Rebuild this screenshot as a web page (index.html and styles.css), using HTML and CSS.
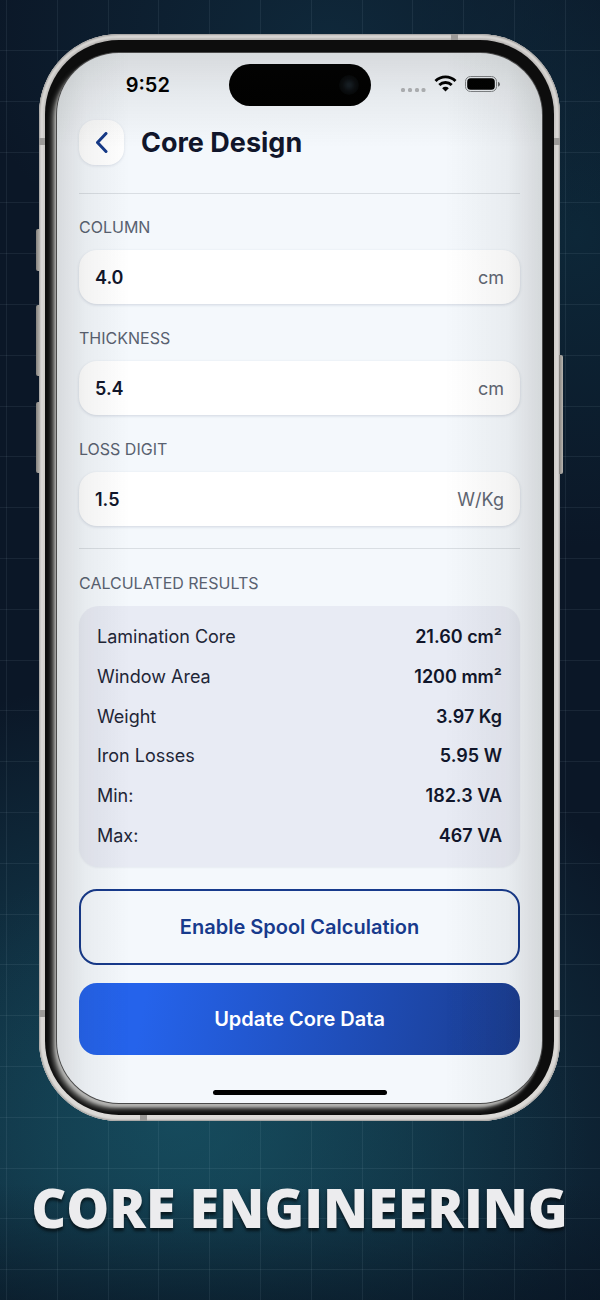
FILE: index.html
```
<!DOCTYPE html>
<html lang="en">
<head>
    <meta charset="UTF-8">
    <meta name="viewport" content="width=device-width, initial-scale=1.0">
    <title>Core Design</title>
    <link rel="stylesheet" href="styles.css">
</head>
<body>

<svg class="grid-lines" aria-hidden="true">
    <defs>
        <pattern id="grid" x="6" y="50" width="254" height="254" patternUnits="userSpaceOnUse">
            <path d="M0 0h1v254h-1zM51 0h1v254h-1zM102 0h1v254h-1zM152 0h1v254h-1zM203 0h1v254h-1z"/>
            <path d="M0 0v1h254v-1zM0 51v1h254v-1zM0 102v1h254v-1zM0 152v1h254v-1zM0 203v1h254v-1z"/>
        </pattern>
    </defs>
    <rect width="100%" height="100%" fill="url(#grid)"/>
</svg>

<main class="page">
    <div class="phone">
        <!-- Side keys -->
        <span class="key key-action"></span>
        <span class="key key-up"></span>
        <span class="key key-down"></span>
        <span class="key key-power"></span>
        <!-- Antenna bands -->
        <span class="band band-top"></span>
        <span class="band band-bottom"></span>
        <span class="band band-side band-left-high"></span>
        <span class="band band-side band-right-high"></span>
        <span class="band band-side band-left-low"></span>
        <span class="band band-side band-right-low"></span>

        <div class="bezel">
            <div class="screen">
                <div class="status-bar">
                    <span class="time">9:52</span>
                    <span class="island"><span class="camera"></span></span>
                    <svg class="status-icons" width="100" height="20" viewBox="0 0 100 20" aria-hidden="true">
                        <g fill="#b4b7ba">
                            <rect x="1" y="13" width="4" height="4" rx="1.5"/>
                            <rect x="8" y="13" width="4" height="4" rx="1.5"/>
                            <rect x="15" y="13" width="4" height="4" rx="1.5"/>
                            <rect x="21.5" y="13" width="4" height="4" rx="1.5"/>
                        </g>
                        <g fill="none" stroke="#000" stroke-width="2.9">
                            <path d="M35.5 6a14.2 14.2 0 0 1 20 0"/>
                            <path d="M39.3 10a9 9 0 0 1 12.4 0"/>
                        </g>
                        <path d="M42.2 13.2a4.6 4.6 0 0 1 6.6 0L45.5 16.6z"/>
                        <rect x="65.5" y="1.5" width="31" height="15" rx="5" fill="none" stroke="#85888b"/>
                        <rect x="67.2" y="3.2" width="27.6" height="11.6" rx="3.5"/>
                        <path d="M98 6.7q2 .6 2 2.5t-2 2.5z" fill="#6b6e70"/>
                    </svg>
                </div>

                <header class="header">
                    <button type="button" class="back" aria-label="Back">
                        <svg width="12" height="22" viewBox="0 0 12 22" fill="none" stroke="#153a8a" stroke-width="3" stroke-linecap="round" stroke-linejoin="round">
                            <path d="M10 1.5 1.5 10.5 10 19.5"/>
                        </svg>
                    </button>
                    <h1>Core Design</h1>
                </header>

                <form class="form">
                    <div class="field">
                        <label for="column">COLUMN</label>
                        <div class="input-box">
                            <input type="text" id="column" inputmode="decimal" value="4.0">
                            <span class="unit">cm</span>
                        </div>
                    </div>
                    <div class="field">
                        <label for="thickness">THICKNESS</label>
                        <div class="input-box">
                            <input type="text" id="thickness" inputmode="decimal" value="5.4">
                            <span class="unit">cm</span>
                        </div>
                    </div>
                    <div class="field">
                        <label for="loss">LOSS DIGIT</label>
                        <div class="input-box">
                            <input type="text" id="loss" inputmode="decimal" value="1.5">
                            <span class="unit">W/Kg</span>
                        </div>
                    </div>

                    <hr>

                    <section class="field">
                        <h2>CALCULATED RESULTS</h2>
                        <div class="results">
                            <table>
                                <tr><th scope="row">Lamination Core</th><td>21.60 cm²</td></tr>
                                <tr><th scope="row">Window Area</th><td>1200 mm²</td></tr>
                                <tr><th scope="row">Weight</th><td>3.97 Kg</td></tr>
                                <tr><th scope="row">Iron Losses</th><td>5.95 W</td></tr>
                                <tr><th scope="row">Min:</th><td>182.3 VA</td></tr>
                                <tr><th scope="row">Max:</th><td>467 VA</td></tr>
                            </table>
                        </div>
                    </section>

                    <div class="actions">
                        <button type="button" class="btn btn-outline">Enable Spool Calculation</button>
                        <button type="submit" class="btn btn-primary">Update Core Data</button>
                    </div>
                </form>

                <div class="home-bar"></div>
            </div>
        </div>
    </div>

    <p class="caption">CORE ENGINEERING</p>
</main>

</body>
</html>
```
FILE: styles.css
```
* {
    box-sizing: border-box;
}

body {
    margin: 0;
    min-height: 100vh;
    position: relative;
    overflow-x: hidden;
    font-family: Inter, "Liberation Sans", sans-serif;
    color: #11162b;
    background:
        linear-gradient(to bottom, transparent 91%, rgba(8, 20, 34, 0.6)),
        radial-gradient(ellipse 60% 24% at 38% 88%, #17506070, transparent),
        radial-gradient(ellipse 90% 34% at 30% 86%, #15475a, transparent),
        radial-gradient(ellipse 60% 20% at 55% 3%, #0f283a, transparent),
        radial-gradient(ellipse 40% 24% at 96% 18%, #0d2738, transparent),
        #0b1727;
}

.grid-lines {
    position: absolute;
    top: 0;
    left: 0;
    width: 100%;
    height: 100%;
    fill: rgba(190, 215, 230, 0.08);
}

.page {
    position: relative;
    padding: 34px 40px 0 39px;
}

/* Phone body */
.phone {
    position: relative;
    padding: 6px;
    border-radius: 80px;
    background: linear-gradient(to bottom, #b9b7b5, #cfcdca 12%, #d2d0cd 88%, #dddbd8);
    box-shadow: inset 0 0 2px 1px #9b9997, inset 0 0 2px 4px #dddbd8;
}

.bezel {
    padding: 13px 12px 12px;
    border-radius: 74px;
    background: #0d0d0d;
    overflow: hidden;
}

.screen {
    position: relative;
    padding: 11px 22px 8px;
    border-radius: 62px;
    background: #f4f8fc;
    box-shadow: 0 0 0 1px #4a4a4a, -2px 4px 3px #b5b5b3, -5px 6px 5px #7c7c7a;
}

/* Shading along the glass edges */
.screen::after {
    content: "";
    position: absolute;
    inset: 0;
    border-radius: 62px;
    pointer-events: none;
    background:
        linear-gradient(to right, rgba(25, 25, 20, 0.13), rgba(25, 25, 20, 0.05) 6%, transparent 15%, transparent 80%, rgba(25, 25, 20, 0.05) 93%, rgba(25, 25, 20, 0.14)),
        linear-gradient(to bottom, rgba(25, 25, 20, 0.13), rgba(25, 25, 20, 0.06) 4%, transparent 9%);
}

.key {
    position: absolute;
    width: 4px;
    border-radius: 2px 0 0 2px;
    background: linear-gradient(to right, #85827e, #b8b5b0);
}

.key-action {
    left: -3px;
    top: 195px;
    height: 42px;
}

.key-up {
    left: -3px;
    top: 271px;
    height: 71px;
}

.key-down {
    left: -3px;
    top: 368px;
    height: 71px;
}

.key-power {
    right: -3px;
    top: 321px;
    height: 119px;
    border-radius: 0 2px 2px 0;
}

.band {
    position: absolute;
    width: 7px;
    height: 6px;
    background: #9c9a98;
}

.band-side {
    width: 6px;
    height: 7px;
}

.band-top {
    top: 0;
    right: 102px;
}

.band-bottom {
    bottom: 0;
    left: 101px;
}

.band-left-high {
    left: 0;
    top: 104px;
}

.band-right-high {
    right: 0;
    top: 104px;
}

.band-left-low {
    left: 0;
    bottom: 104px;
}

.band-right-low {
    right: 0;
    bottom: 104px;
}

/* Status bar */
.status-bar {
    display: grid;
    grid-template-columns: 1fr 142px 1fr;
    align-items: center;
    height: 42px;
    color: #000;
}

.time {
    padding-right: 12px;
    text-align: center;
    font-size: 20px;
    font-weight: 600;
}

.island {
    display: flex;
    align-items: center;
    justify-content: flex-end;
    height: 42px;
    padding-right: 12px;
    border-radius: 21px;
    background: #000;
}

.camera {
    width: 20px;
    height: 20px;
    border-radius: 50%;
    background: radial-gradient(circle, #161e24 10%, #0a0d10 45%, #050708 70%);
}

.status-icons {
    justify-self: end;
    margin-right: 20px;
}

/* Header */
.header {
    display: flex;
    align-items: center;
    gap: 17px;
    margin: 14px 0 21px;
    padding-bottom: 28px;
    border-bottom: 1px solid #d9dee3;
}

.back {
    display: flex;
    align-items: center;
    justify-content: center;
    width: 45px;
    height: 45px;
    padding: 0;
    border: none;
    border-radius: 16px;
    background: #fff;
    box-shadow: 0 1px 3px rgba(30, 50, 90, 0.12);
    cursor: pointer;
}

h1 {
    margin: 0;
    font-size: 27px;
    font-weight: 700;
    line-height: 36px;
}

/* Form */
.form {
    display: grid;
    gap: 22px;
}

.field {
    display: grid;
    gap: 11px;
}

.field label,
.field h2 {
    margin: 0;
    font-size: 16px;
    font-weight: 400;
    line-height: 24px;
    color: #596170;
}

.input-box {
    display: flex;
    align-items: center;
    height: 54px;
    padding: 0 16px;
    border-radius: 18px;
    background: #fff;
    box-shadow: 0 1px 3px rgba(30, 50, 90, 0.17);
}

.input-box input {
    flex: 1;
    min-width: 0;
    padding: 0;
    border: none;
    outline: none;
    background: transparent;
    font: inherit;
    font-size: 18px;
    font-weight: 600;
    color: inherit;
}

.unit {
    font-size: 18px;
    color: #5f6673;
}

hr {
    width: 100%;
    height: 1px;
    margin: 0;
    border: none;
    background: #d9dee3;
}

.results {
    padding: 11px 18px 12px;
    border-radius: 20px;
    background: #e8ebf4;
    box-shadow: 0 1px 2px rgba(30, 50, 90, 0.06);
}

.results table {
    width: 100%;
    height: 238px;
    border-collapse: collapse;
    font-size: 18px;
}

.results th,
.results td {
    padding: 0;
    text-align: left;
    font-weight: 400;
    color: #1f2637;
}

.results td {
    text-align: right;
    font-weight: 600;
    color: #11162b;
}

.actions {
    display: grid;
    gap: 18px;
}

.btn {
    height: 72px;
    border: none;
    border-radius: 18px;
    font-family: inherit;
    font-size: 20px;
    font-weight: 600;
    cursor: pointer;
}

.btn-outline {
    height: 76px;
    border: 2px solid #173a8c;
    background: transparent;
    color: #173a8c;
}

.btn-primary {
    background: linear-gradient(100deg, #2563eb 15%, #1a3c8f 100%);
    color: #fff;
}

.home-bar {
    width: 174px;
    height: 5px;
    margin: 35px auto 0;
    border-radius: 3px;
    background: #000;
}

/* Caption under the phone */
.caption {
    margin: 50px -39px 0;
    text-align: center;
    white-space: nowrap;
    font-family: "Open Sans", "Noto Sans", sans-serif;
    font-size: 54px;
    font-weight: 800;
    line-height: 72px;
    color: #ececee;
    text-shadow: 0 3px 3px rgba(0, 0, 0, 0.6);
}
```
